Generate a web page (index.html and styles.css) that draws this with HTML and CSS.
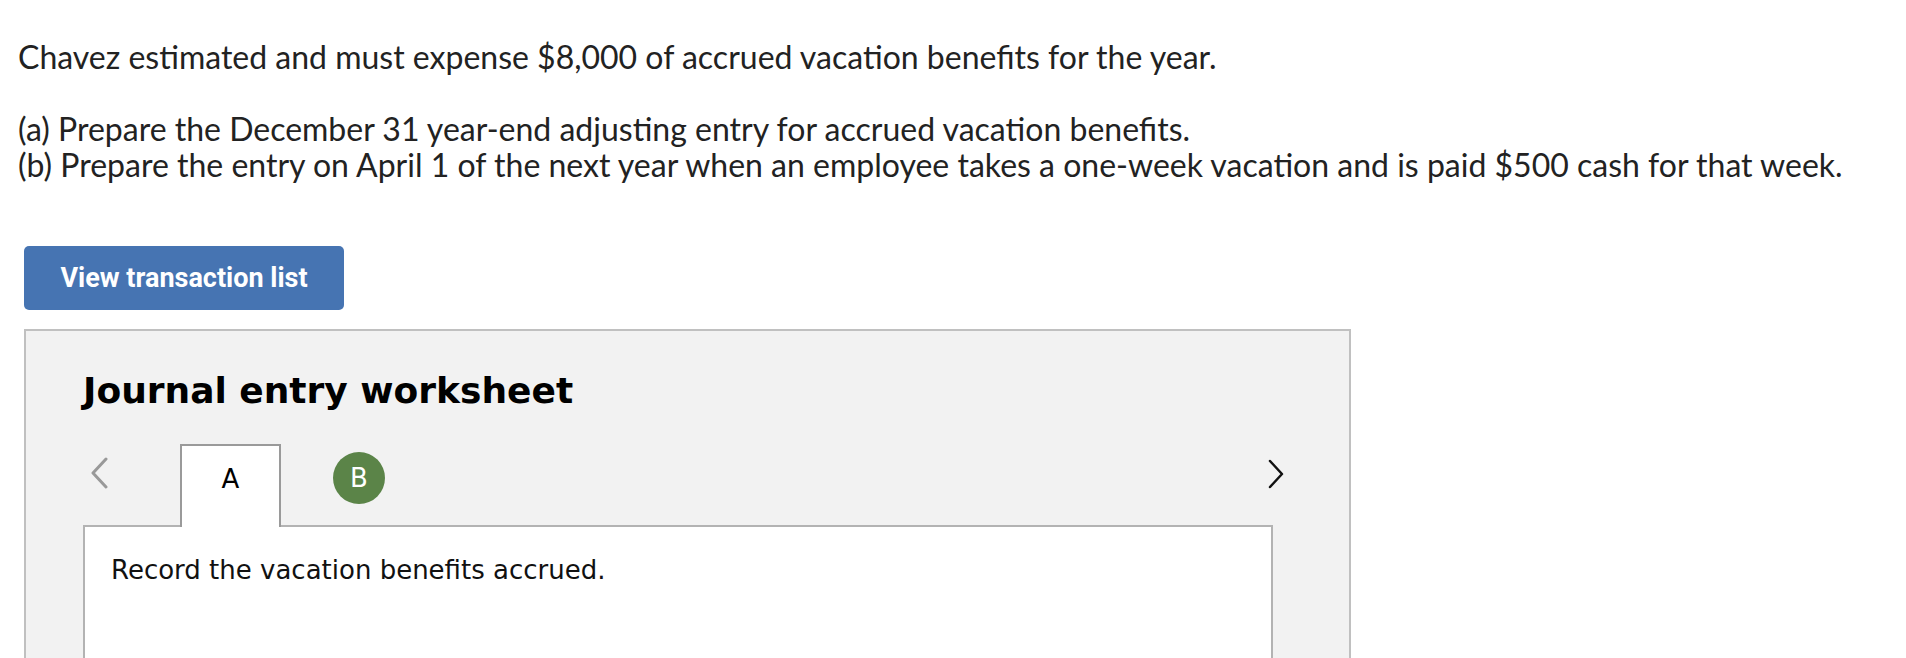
FILE: index.html
```html
<!DOCTYPE html>
<html lang="en">
<head>
    <meta charset="UTF-8">
    <meta name="viewport" content="width=device-width, initial-scale=1.0">
    <title>Journal entry worksheet</title>
    <link rel="stylesheet" href="styles.css">
</head>
<body>
    <div class="question">
        <p>Chavez estimated and must expense $8,000 of accrued vacation benefits for the year.</p>
        <p class="last">(a) Prepare the December 31 year-end adjusting entry for accrued vacation benefits.<br>
        (b) Prepare the entry on April 1 of the next year when an employee takes a one-week vacation and is paid $500 cash for that week.</p>
    </div>

    <button class="btn-list">View transaction list</button>

    <div class="worksheet">
        <h2 class="worksheet-title">Journal entry worksheet</h2>

        <div class="tab-row">
            <span class="nav-prev">
                <svg width="20" height="32" viewBox="0 0 20 32"><polyline points="17,2 4,16 17,30" fill="none" stroke="#999" stroke-width="3" stroke-linecap="round" stroke-linejoin="round"/></svg>
            </span>
            <div class="tab tab-active">A</div>
            <div class="tab-done">B</div>
            <span class="nav-next">
                <svg width="16" height="30" viewBox="0 0 16 30"><polyline points="2,2 14,15 2,28" fill="none" stroke="#111" stroke-width="2.5" stroke-linecap="round" stroke-linejoin="round"/></svg>
            </span>
        </div>

        <div class="panel">
            <p class="panel-text">Record the vacation benefits accrued.</p>
        </div>
    </div>
</body>
</html>
```

FILE: styles.css
```css
body {
    margin: 0;
    background-color: #fff;
    font-family: Lato, "Open Sans", sans-serif;
}
.question {
    padding: 39px 0 0 18px;
    color: #222;
    font-size: 32px;
    line-height: 36px;
}
.question p {
    margin: 0 0 36px 0;
}
.question p.last {
    margin-bottom: 0;
}
.btn-list {
    display: block;
    margin: 63px 0 0 24px;
    width: 320px;
    height: 64px;
    border: none;
    border-radius: 5px;
    background-color: #4674b2;
    color: #fff;
    font-family: Roboto, sans-serif;
    font-weight: bold;
    font-size: 27px;
}
.worksheet {
    margin: 19px 0 0 24px;
    min-height: 340px;
    padding: 40px 0 0 57px;
    box-sizing: border-box;
    width: 1327px;
    border: 2px solid #c0c0c0;
    background-color: #f2f2f2;
    font-family: "DejaVu Sans", Verdana, sans-serif;
}
.worksheet-title {
    margin: 0;
    font-size: 36px;
    line-height: 40px;
    color: #000;
}
.tab-row {
    display: flex;
    align-items: flex-start;
    width: 1201px;
    height: 81px;
    margin-top: 33px;
}
.nav-prev {
    margin: 13px 0 0 6px;
    height: 32px;
}
.nav-next {
    margin: 15px 0 0 auto;
    height: 30px;
}
.tab {
    margin-left: 71px;
    width: 101px;
    height: 83px;
    box-sizing: border-box;
    border: 2px solid #9a9a9a;
    border-bottom: none;
    background-color: #fff;
    text-align: center;
    font-size: 26px;
    line-height: 66px;
    color: #000;
    position: relative;
    z-index: 1;
}
.tab-done {
    margin: 8px 0 0 52px;
    width: 52px;
    height: 52px;
    border-radius: 50%;
    background-color: #5b8448;
    color: #fff;
    text-align: center;
    font-size: 26px;
    line-height: 52px;
}
.panel {
    width: 1190px;
    min-height: 200px;
    box-sizing: border-box;
    border: 2px solid #b3b3b3;
    background-color: #fff;
    padding: 28px 0 0 26px;
}
.panel-text {
    margin: 0;
    font-size: 26px;
    line-height: 30px;
    color: #111;
}
```
